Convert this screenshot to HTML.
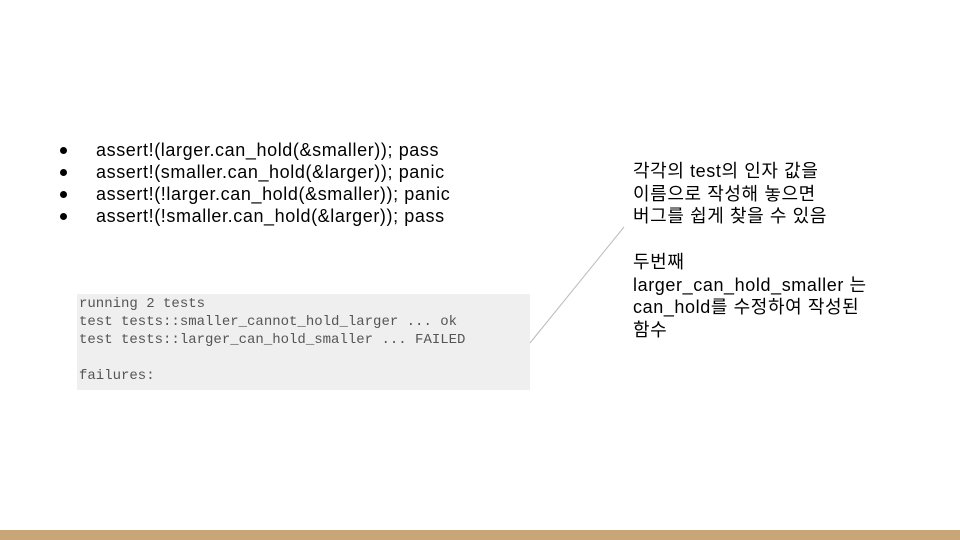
<!DOCTYPE html>
<html><head><meta charset="utf-8"><style>
body{margin:0;width:960px;height:540px;position:relative;background:#fff;overflow:hidden;font-family:"Liberation Sans","Noto Sans CJK KR",sans-serif;color:#000}
.b{position:absolute;left:56px;font-size:18px;line-height:22px;top:139px;letter-spacing:0.6px}
.b div{position:relative;padding-left:40px;white-space:nowrap}
.b div:before{content:"";position:absolute;left:4px;top:8px;width:7px;height:7px;border-radius:50%;background:#000}
.code{position:absolute;left:77px;top:294px;width:453px;height:96px;background:#efefef;font-family:"Liberation Mono",monospace;font-size:14px;line-height:18px;color:#555;padding:1px 0 0 2px;box-sizing:border-box;white-space:pre}
.r{position:absolute;left:633px;top:160px;font-size:18px;line-height:22.7px;letter-spacing:0.6px;white-space:nowrap}
.bar{position:absolute;left:0;top:530px;width:960px;height:10px;background:#c9a677}
</style></head><body>
<div class="b">
<div>assert!(larger.can_hold(&amp;smaller)); pass</div>
<div>assert!(smaller.can_hold(&amp;larger)); panic</div>
<div>assert!(!larger.can_hold(&amp;smaller)); panic</div>
<div>assert!(!smaller.can_hold(&amp;larger)); pass</div>
</div>
<div class="code">running 2 tests
test tests::smaller_cannot_hold_larger ... ok
test tests::larger_can_hold_smaller ... FAILED

failures:</div>
<svg style="position:absolute;left:0;top:0" width="960" height="540"><line x1="530" y1="343" x2="624" y2="227" stroke="#bbb" stroke-width="1"/></svg>
<div class="r">각각의 test의 인자 값을<br>이름으로 작성해 놓으면<br>버그를 쉽게 찾을 수 있음<br><br>두번째<br>larger_can_hold_smaller 는<br>can_hold를 수정하여 작성된<br>함수</div>
<div class="bar"></div>
</body></html>
